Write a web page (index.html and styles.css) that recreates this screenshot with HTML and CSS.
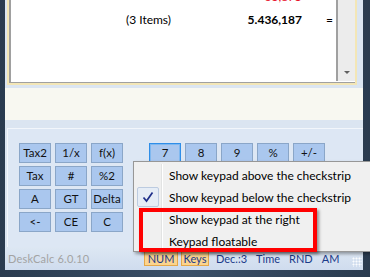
FILE: index.html
```html
<!DOCTYPE html>
<html>
<head>
<meta charset="utf-8">
<link rel="stylesheet" href="styles.css">
</head>
<body>
<div class="window">
  <div class="top">
    <div class="list">
      <div class="list-inner">
        <div class="rows">
          <div class="row row-red"><span class="label"></span><span class="num">63,875</span><span class="op">-</span></div>
          <div class="row row-total"><span class="label">(3 Items)</span><span class="num bold">5.436,187</span><span class="op">=</span></div>
        </div>
        <div class="scrollbar"><span class="arrow"></span></div>
      </div>
    </div>
  </div>
  <div class="cream"></div>
  <div class="panel">
    <div class="panel-inner">
      <div class="keys">
        <div class="grid left">
          <span class="btn">Tax2</span><span class="btn">1/x</span><span class="btn">f(x)</span>
          <span class="btn">Tax</span><span class="btn">#</span><span class="btn">%2</span>
          <span class="btn">A</span><span class="btn">GT</span><span class="btn">Delta</span>
          <span class="btn">&lt;-</span><span class="btn">CE</span><span class="btn">C</span>
        </div>
        <div class="grid right">
          <span class="btn focus">7</span><span class="btn">8</span><span class="btn">9</span><span class="btn">%</span><span class="btn">+/-</span>
        </div>
      </div>
    </div>
  </div>
  <div class="status">
    <span class="app">DeskCalc 6.0.10</span>
    <span class="badge num-badge">NUM</span>
    <span class="badge keys-badge">Keys</span>
    <span class="st first">Dec.:3</span>
    <span class="st">Time</span>
    <span class="st">RND</span>
    <span class="st">AM</span>
    <span class="grip"></span>
  </div>
</div>

<div class="menu">
  <div class="item"><span class="gut"></span><span class="txt">Show keypad above the checkstrip</span></div>
  <div class="item"><span class="gut"><span class="check"><svg width="12" height="12" viewBox="0 0 12 12"><polyline points="1.5,6.5 4.5,10 10.5,1.5" fill="none" stroke="#1f2f8a" stroke-width="1.7"/></svg></span></span><span class="txt">Show keypad below the checkstrip</span></div>
  <div class="item"><span class="gut"></span><span class="txt">Show keypad at the right</span></div>
  <div class="item"><span class="gut"></span><span class="txt">Keypad floatable</span></div>
</div>
<div class="highlight"></div>
</body>
</html>
```
FILE: styles.css
```css
html, body {
  margin: 0;
  padding: 0;
}
body {
  width: 370px;
  height: 277px;
  overflow: hidden;
  background: linear-gradient(90deg, #2a3b4f 0, #3b5068 50%, #2a3b4f 100%);
  font-family: Lato, "Liberation Sans", sans-serif;
  font-size: 12px;
  color: #000;
  position: relative;
}
.window {
  margin: 0 7px 0 5px;
  width: 358px;
  height: 270px;
  display: flex;
  flex-direction: column;
  background: #dbe5f1;
}
.top {
  height: 88px;
  padding: 0 6px 3px 2px;
  box-sizing: border-box;
  background: #dbe5f1;
}
.list {
  height: 85px;
  border: 2px solid #f3e6b6;
  border-top: none;
  box-sizing: border-box;
  background: #fff;
}
.list-inner {
  height: 100%;
  border-left: 2px solid #a0a0a0;
  border-bottom: 1px solid #a0a0a0;
  box-sizing: border-box;
  display: flex;
  padding-bottom: 1px;
}
.rows {
  flex: 1;
  background: #fff;
  border-right: 2px solid #a0a0a0;
}
.row {
  display: flex;
  height: 17px;
  align-items: center;
}
.row-red {
  margin-top: -12px;
  color: #e8142c;
}
.row-total {
  margin-top: 6px;
}
.label {
  width: 160px;
  flex: none;
  text-align: right;
}
.num {
  width: 131px;
  flex: none;
  text-align: right;
}
.bold {
  font-weight: bold;
}
.op {
  width: 31px;
  flex: none;
  text-align: right;
}
.scrollbar {
  width: 17px;
  background: #ececec;
  position: relative;
}
.arrow {
  position: absolute;
  left: 6px;
  bottom: 7px;
  width: 0;
  height: 0;
  border-left: 3px solid transparent;
  border-right: 3px solid transparent;
  border-top: 3px solid #606060;
}
.cream {
  height: 32px;
  background: #f8f8f1;
}
.panel {
  height: 127px;
  background: #dbe5f1;
  padding: 8px 0 0 2px;
  box-sizing: border-box;
}
.panel-inner {
  height: 100%;
  border-top: 1px solid #f2f6fb;
  border-left: 1px solid #f2f6fb;
  background: #dde7f4;
  box-sizing: border-box;
  padding: 14px 0 0 11px;
}
.keys {
  display: flex;
  gap: 26px;
  align-items: flex-start;
}
.grid {
  display: grid;
  grid-template-columns: repeat(3, 32px);
  grid-auto-rows: 20px;
  column-gap: 4px;
  row-gap: 3px;
}
.grid.right {
  grid-template-columns: repeat(5, 32px);
}
.btn {
  box-sizing: border-box;
  border: 1px solid #8aa6c8;
  background: #aac7ee;
  color: #111;
  display: flex;
  align-items: center;
  justify-content: center;
  font-size: 11.5px;
  line-height: 1;
  white-space: nowrap;
}
.btn.focus {
  border: 1px solid #2f8ee8;
  box-shadow: inset 0 0 0 1px #7fb8f0;
}
.status {
  height: 23px;
  display: flex;
  align-items: center;
  background: linear-gradient(#dde7f3, #cfdcee);
  padding-left: 3px;
  color: #1b3b8a;
  font-size: 11px;
}
.app {
  color: #a3a3a3;
  width: 136px;
  flex: none;
  letter-spacing: 0.2px;
}
.badge {
  box-sizing: border-box;
  height: 15px;
  border: 1px solid #e5a748;
  background: #fbd48e;
  display: flex;
  align-items: center;
  justify-content: center;
  color: #1b3b8a;
  flex: none;
}
.num-badge {
  width: 34px;
  margin-right: 3px;
}
.keys-badge {
  width: 28px;
}
.st {
  margin-left: 9px;
}
.st.first {
  margin-left: 7px;
}
.grip {
  margin-left: auto;
  margin-right: 1px;
  width: 10px;
  height: 10px;
  background:
    radial-gradient(circle, #fff 0.8px, transparent 1.2px) 0 0 / 3px 3px;
  opacity: .9;
  align-self: flex-end;
  margin-bottom: 3px;
}
.menu {
  position: absolute;
  left: 133px;
  top: 161px;
  width: 250px;
  height: 91px;
  box-sizing: border-box;
  border: 1px solid #979797;
  background: #f0f0f0;
  padding: 2px;
  box-shadow: 2px 2px 3px rgba(0, 0, 0, .35);
}
.menu::before {
  content: "";
  position: absolute;
  left: 27px;
  top: 2px;
  bottom: 2px;
  width: 1px;
  background: #e2e3e3;
  box-shadow: 1px 0 0 #fff;
}
.item {
  height: 22px;
  display: flex;
  align-items: center;
  white-space: nowrap;
}
.gut {
  width: 24px;
  height: 20px;
  margin-right: 9px;
  display: flex;
  align-items: center;
  justify-content: center;
  flex: none;
}
.check {
  width: 22px;
  height: 20px;
  box-sizing: border-box;
  border: 1px solid #bccbe0;
  background: #e6edf6;
  border-radius: 2px;
  display: flex;
  align-items: center;
  justify-content: center;
}
.highlight {
  position: absolute;
  left: 139px;
  top: 208px;
  width: 178px;
  height: 44px;
  box-sizing: border-box;
  border: 4px solid #f00;
  box-shadow: 2px 2px 3px rgba(0, 0, 0, .4);
}
```
